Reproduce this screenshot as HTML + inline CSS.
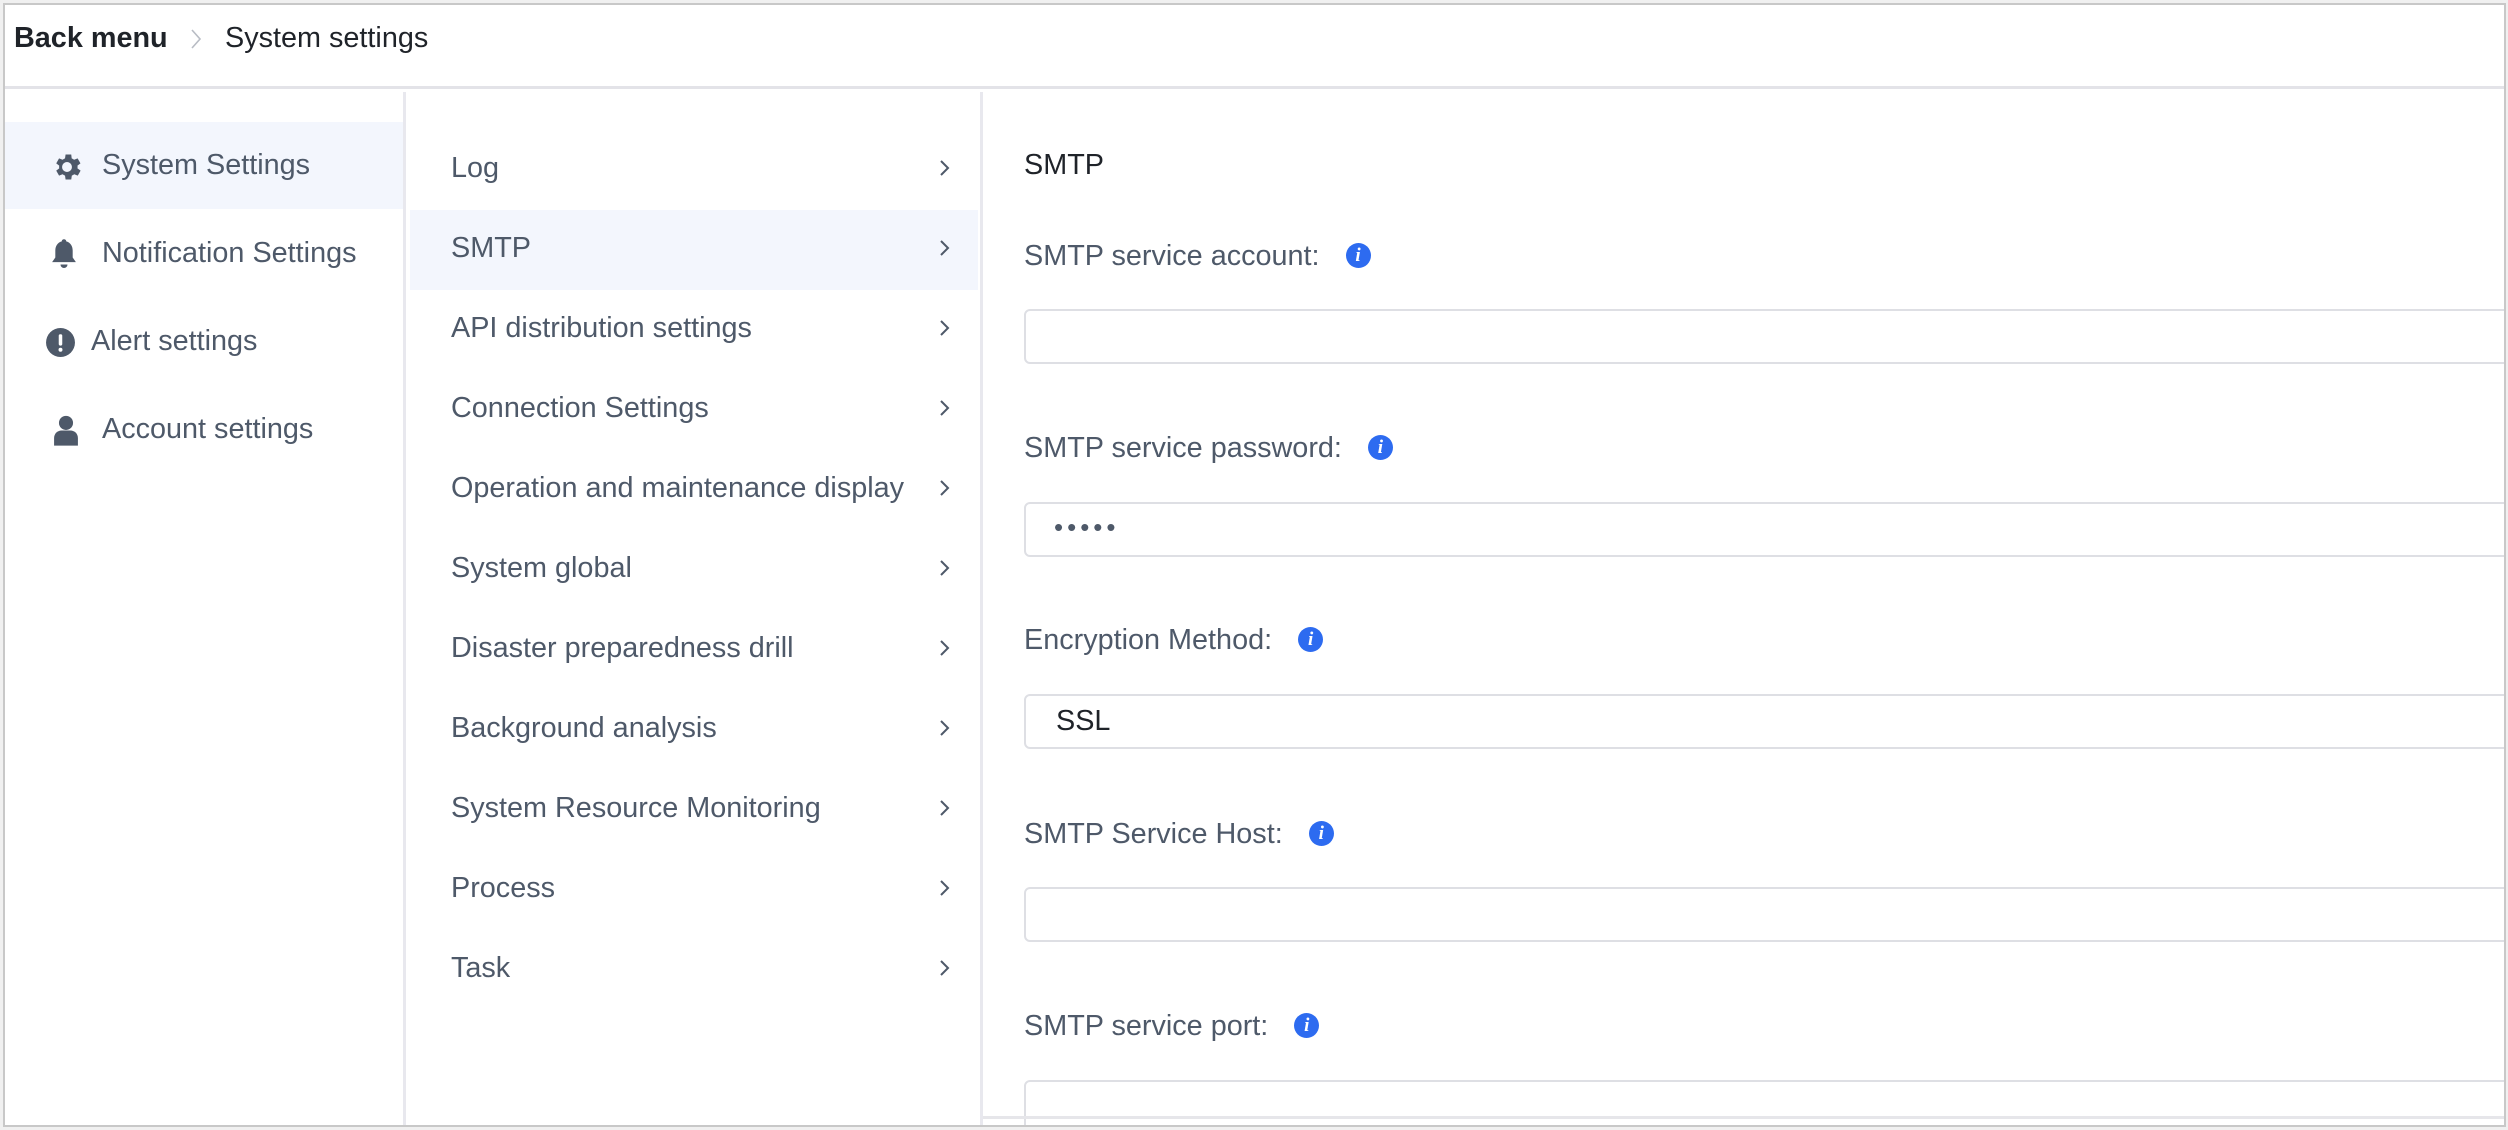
<!DOCTYPE html>
<html><head><meta charset="utf-8"><style>
*{box-sizing:border-box;margin:0;padding:0}
body{width:2508px;height:1130px;background:#f0f0f0;font-family:"Liberation Sans",Arial,sans-serif;position:relative;overflow:hidden}
.frame{position:absolute;left:3px;top:3px;width:2503px;height:1124px;background:#fff;border:2px solid #c8c8c8;overflow:hidden}
.a{position:absolute}
.hdr{left:0;top:0;width:100%;height:84px;border-bottom:3px solid #e3e3e8}
.t{font-size:28.8px;line-height:34px;white-space:nowrap}
.nav{color:#4e5969}
.vl{width:3px;background:#e8e8ee}
.inp{position:absolute;left:1019px;width:1600px;height:55px;border:2px solid #dedfe4;border-radius:6px;background:#fff}
.lbl{position:absolute;left:1019px;color:#4e5969;font-size:28.8px;line-height:34px;white-space:nowrap}
.info{display:inline-block;width:25px;height:25px;border-radius:50%;background:#2d6bf0;color:#fff;font:italic bold 19px/25px "Liberation Serif",serif;text-align:center;vertical-align:middle;margin-left:26px;position:relative;top:-2px}
.chev{position:absolute;left:930px;width:18px;height:18px}
</style></head><body>
<div class="frame">
 <div class="a hdr"></div>
 <div class="a t" style="left:9px;top:16px;font-weight:bold;color:#1f2329">Back menu</div>
 <svg class="a" style="left:184px;top:22px" width="14" height="24" viewBox="0 0 14 24"><path d="M3 3l8 9-8 9" fill="none" stroke="#b8bcc4" stroke-width="1.6"/></svg>
 <div class="a t" style="left:220px;top:16px;color:#1f2329">System settings</div>

 <div class="a vl" style="left:398px;top:87px;height:1040px"></div>
 <div class="a vl" style="left:975px;top:87px;height:1040px"></div>

 <div class="a" style="left:0;top:117px;width:398px;height:87px;background:#f3f6fd"></div>
 <svg class="a" style="left:45px;top:145px" width="34" height="34" viewBox="0 0 24 24"><path fill="#4e5969" d="M19.4 13a7.5 7.5 0 0 0 0-2l2.1-1.6-2-3.5-2.5 1a7.6 7.6 0 0 0-1.7-1L15 3.2h-4l-.4 2.7a7.6 7.6 0 0 0-1.7 1l-2.5-1-2 3.5L6.5 11a7.5 7.5 0 0 0 0 2l-2.1 1.6 2 3.5 2.5-1a7.6 7.6 0 0 0 1.7 1l.4 2.7h4l.4-2.7a7.6 7.6 0 0 0 1.7-1l2.5 1 2-3.5zM12 15.5a3.5 3.5 0 1 1 0-7 3.5 3.5 0 0 1 0 7z"/></svg>
 <div class="a t nav" style="left:97px;top:143px">System Settings</div>
 <svg class="a" style="left:45px;top:232px" width="28" height="34" viewBox="0 0 20 24"><path fill="#4e5969" d="M10 1.5c1 0 1.6.7 1.6 1.5 3 .8 4.6 3.4 4.6 6.5v5l2.3 3.3H1.5L3.8 14.5v-5c0-3.1 1.6-5.7 4.6-6.5 0-.8.6-1.5 1.6-1.5zM7.5 19.5h5a2.5 2.5 0 0 1-5 0z"/></svg>
 <div class="a t nav" style="left:97px;top:231px">Notification Settings</div>
 <svg class="a" style="left:40px;top:322px" width="31" height="31" viewBox="0 0 30 30"><circle cx="15" cy="15" r="14" fill="#4e5969"/><rect x="13.3" y="7" width="3.4" height="11" rx="1.5" fill="#fff"/><circle cx="15" cy="22" r="1.9" fill="#fff"/></svg>
 <div class="a t nav" style="left:86px;top:319px">Alert settings</div>
 <svg class="a" style="left:48px;top:409px" width="26" height="33" viewBox="0 0 24 30"><circle cx="12" cy="8" r="6.5" fill="#4e5969"/><path fill="#4e5969" d="M1 29v-7c0-4 3-7 7-7h8c4 0 7 3 7 7v7z"/></svg>
 <div class="a t nav" style="left:97px;top:407px">Account settings</div>

 <div class="a" style="left:405px;top:205px;width:568px;height:80px;background:#f3f6fd"></div>
 <div class="a t nav" style="left:446px;top:146px">Log</div>
 <div class="a t nav" style="left:446px;top:226px">SMTP</div>
 <div class="a t nav" style="left:446px;top:306px">API distribution settings</div>
 <div class="a t nav" style="left:446px;top:386px">Connection Settings</div>
 <div class="a t nav" style="left:446px;top:466px">Operation and maintenance display</div>
 <div class="a t nav" style="left:446px;top:546px">System global</div>
 <div class="a t nav" style="left:446px;top:626px">Disaster preparedness drill</div>
 <div class="a t nav" style="left:446px;top:706px">Background analysis</div>
 <div class="a t nav" style="left:446px;top:786px">System Resource Monitoring</div>
 <div class="a t nav" style="left:446px;top:866px">Process</div>
 <div class="a t nav" style="left:446px;top:946px">Task</div>
 <svg class="chev" style="top:154px" viewBox="0 0 18 18"><path d="M6 2l7 7-7 7" fill="none" stroke="#4e5969" stroke-width="2"/></svg>
 <svg class="chev" style="top:234px" viewBox="0 0 18 18"><path d="M6 2l7 7-7 7" fill="none" stroke="#4e5969" stroke-width="2"/></svg>
 <svg class="chev" style="top:314px" viewBox="0 0 18 18"><path d="M6 2l7 7-7 7" fill="none" stroke="#4e5969" stroke-width="2"/></svg>
 <svg class="chev" style="top:394px" viewBox="0 0 18 18"><path d="M6 2l7 7-7 7" fill="none" stroke="#4e5969" stroke-width="2"/></svg>
 <svg class="chev" style="top:474px" viewBox="0 0 18 18"><path d="M6 2l7 7-7 7" fill="none" stroke="#4e5969" stroke-width="2"/></svg>
 <svg class="chev" style="top:554px" viewBox="0 0 18 18"><path d="M6 2l7 7-7 7" fill="none" stroke="#4e5969" stroke-width="2"/></svg>
 <svg class="chev" style="top:634px" viewBox="0 0 18 18"><path d="M6 2l7 7-7 7" fill="none" stroke="#4e5969" stroke-width="2"/></svg>
 <svg class="chev" style="top:714px" viewBox="0 0 18 18"><path d="M6 2l7 7-7 7" fill="none" stroke="#4e5969" stroke-width="2"/></svg>
 <svg class="chev" style="top:794px" viewBox="0 0 18 18"><path d="M6 2l7 7-7 7" fill="none" stroke="#4e5969" stroke-width="2"/></svg>
 <svg class="chev" style="top:874px" viewBox="0 0 18 18"><path d="M6 2l7 7-7 7" fill="none" stroke="#4e5969" stroke-width="2"/></svg>
 <svg class="chev" style="top:954px" viewBox="0 0 18 18"><path d="M6 2l7 7-7 7" fill="none" stroke="#4e5969" stroke-width="2"/></svg>

 <div class="a t" style="left:1019px;top:143px;color:#1f2329">SMTP</div>
 <div class="lbl" style="top:234px">SMTP service account:<span class="info">i</span></div>
 <div class="inp" style="top:304px"></div>
 <div class="lbl" style="top:426px">SMTP service password:<span class="info">i</span></div>
 <div class="inp" style="top:497px"><span style="position:absolute;left:28px;top:8px;font-size:26px;letter-spacing:4px;color:#4e5969">•••••</span></div>
 <div class="lbl" style="top:618px">Encryption Method:<span class="info">i</span></div>
 <div class="inp" style="top:689px"><span style="position:absolute;left:30px;top:9px;font-size:28.8px;color:#1f2329">SSL</span></div>
 <div class="lbl" style="top:812px">SMTP Service Host:<span class="info">i</span></div>
 <div class="inp" style="top:882px"></div>
 <div class="lbl" style="top:1004px">SMTP service port:<span class="info">i</span></div>
 <div class="inp" style="top:1075px"></div>
 <div class="a" style="left:978px;top:1111px;width:1530px;height:3px;background:#e6e6ea"></div>
</div>
</body></html>
